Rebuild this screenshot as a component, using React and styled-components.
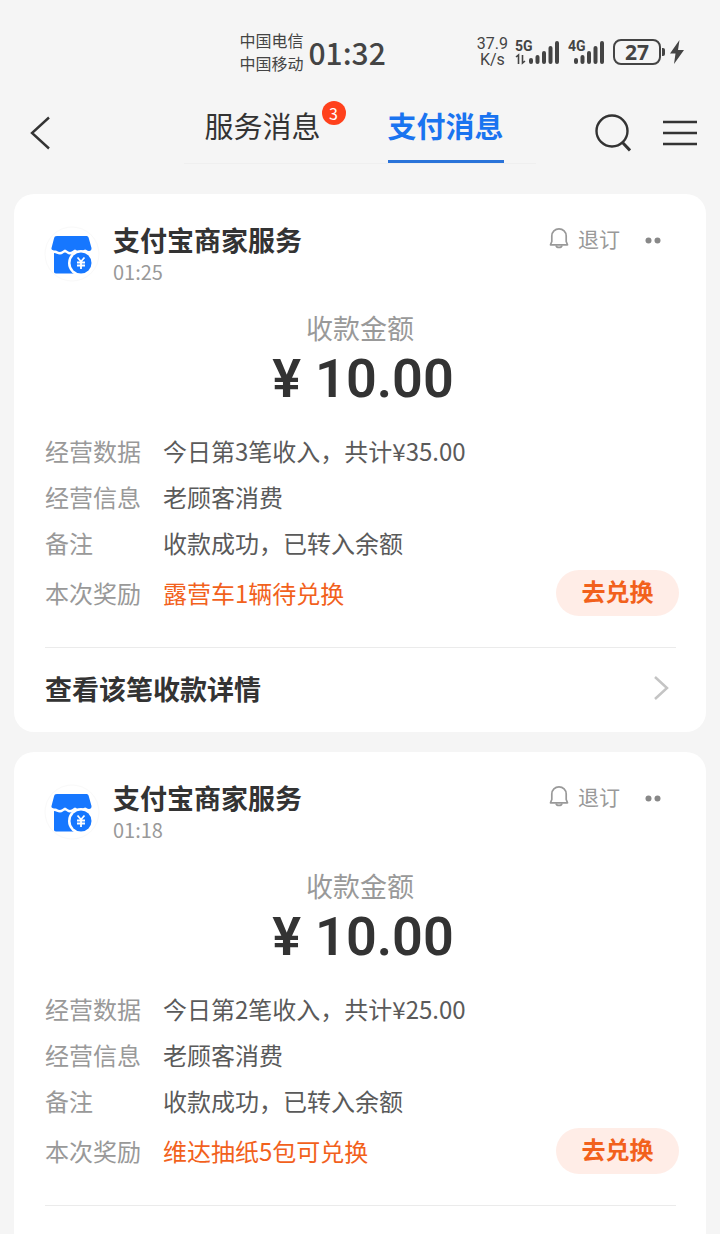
import React, { useState } from 'react';
import styled, { createGlobalStyle } from 'styled-components';

const GlobalStyle = createGlobalStyle`
  * {
    box-sizing: border-box;
  }

  body {
    margin: 0;
    background: #f5f5f5;
    font-family: 'Noto Sans CJK SC', 'Noto Sans', sans-serif;
    color: #333;
  }

  button {
    padding: 0;
    border: none;
    background: none;
    font-family: inherit;
    color: inherit;
    cursor: pointer;
  }

  svg {
    display: block;
    flex-shrink: 0;
  }
`;

// Page
const Page = styled.div`
  display: flex;
  flex-direction: column;
  height: 100vh;
  overflow: hidden;
`;

const MessageList = styled.main`
  flex: 1;
  min-height: 0;
  display: flex;
  flex-direction: column;
  gap: 20px;
  padding: 20px 14px;
  overflow-y: auto;
  scrollbar-width: none;
`;

// Status bar
const StatusBar = styled.div`
  display: flex;
  flex-shrink: 0;
  align-items: center;
  justify-content: flex-end;
  height: 92px;
  padding: 12px 36px 0 0;
  color: #444;
`;

const Carriers = styled.div`
  margin-right: 5px;
  font-size: 16px;
  line-height: 23px;
`;

const Clock = styled.div`
  margin-right: 91px;
  font-size: 30px;
  font-weight: 500;
  line-height: 46px;
`;

const NetSpeed = styled.div`
  margin-right: 7px;
  font-family: Roboto, sans-serif;
  font-size: 16px;
  line-height: 16px;
  text-align: center;
`;

const Signal = styled.div`
  position: relative;
  width: ${({ $wide }) => ($wide ? 44 : 36)}px;
  height: 28px;
  margin-right: 9px;

  svg {
    position: absolute;
    right: 0;
    bottom: 0;
  }
`;

const SignalType = styled.span`
  position: absolute;
  left: 0;
  top: 0;
  font-family: Roboto, sans-serif;
  font-size: 14px;
  font-weight: 700;
  line-height: 16px;
`;

const Battery = styled.div`
  display: flex;
  align-items: center;
  justify-content: center;
  width: 48px;
  height: 26px;
  border: 2px solid #444;
  border-radius: 8px;
  font-family: 'Open Sans', sans-serif;
  font-size: 21px;
  font-weight: 700;
  line-height: 22px;
`;

const BatteryCap = styled.div`
  width: 3px;
  height: 8px;
  margin: 0 5px 0 1px;
  border-radius: 0 2px 2px 0;
  background: #444;
`;

// Navigation
const NavBar = styled.header`
  display: grid;
  flex-shrink: 0;
  grid-template-columns: 1fr auto 1fr;
  height: 82px;
`;

const BackButton = styled.button`
  justify-self: start;
  height: 82px;
  padding-left: 30px;
`;

const Tabs = styled.nav`
  display: flex;
  gap: 67px;
  height: 72px;
  padding: 0 32px 0 20px;
  border-bottom: 1px solid #efefef;
`;

const Tab = styled.button`
  position: relative;
  height: 71px;
  padding-bottom: 2px;
  border-bottom: 3px solid ${({ $active }) => ($active ? '#2a73d9' : 'transparent')};
  font-size: 29px;
  font-weight: ${({ $active }) => ($active ? 700 : 400)};
  line-height: 66px;
  color: ${({ $active }) => ($active ? '#1a74f0' : '#333')};
`;

const Badge = styled.span`
  position: absolute;
  top: 9px;
  right: -25px;
  width: 24px;
  height: 24px;
  border-radius: 50%;
  background: #ff411c;
  color: #fff;
  font-size: 16px;
  line-height: 24px;
  text-align: center;
`;

const Actions = styled.div`
  display: flex;
  align-items: center;
  justify-content: flex-end;
  gap: 32px;
  padding-right: 23px;
`;

// Message card
const Card = styled.article`
  flex-shrink: 0;
  padding-top: 28px;
  border-radius: 20px;
  background: #fff;
`;

const CardHeader = styled.div`
  display: flex;
  align-items: flex-start;
  padding: 0 44px 0 30px;
`;

const Avatar = styled.div`
  margin: 4px 13px 0 0;
`;

const Sender = styled.div`
  flex: 1;
`;

const SenderName = styled.h2`
  margin: 0;
  font-size: 27px;
  font-weight: 700;
  line-height: 36px;
`;

const SentAt = styled.div`
  font-size: 20px;
  line-height: 28px;
  color: #999;
`;

const Unsubscribe = styled.button`
  display: flex;
  align-items: center;
  gap: 9px;
  margin-right: 25px;
  font-size: 21px;
  line-height: 32px;
  color: #999;
`;

const MoreButton = styled.button`
  display: flex;
  align-items: center;
  height: 36px;
  color: #888;
`;

const AmountLabel = styled.div`
  margin-top: 24px;
  font-size: 27px;
  line-height: 36px;
  color: #999;
  text-align: center;
`;

const Amount = styled.div`
  display: flex;
  justify-content: center;
  gap: 14px;
  padding-left: 6px;
  font-family: Roboto, sans-serif;
  font-size: 54px;
  font-weight: 600;
  line-height: 66px;
`;

const Fields = styled.dl`
  margin: 16px 27px 0 31px;
`;

const Field = styled.div`
  display: flex;
  align-items: center;
  font-size: 24px;
  line-height: 46px;

  &:last-child {
    margin-top: 4px;
  }
`;

const FieldLabel = styled.dt`
  width: 96px;
  margin-right: 22px;
  color: #999;
`;

const FieldValue = styled.dd`
  display: flex;
  flex: 1;
  justify-content: space-between;
  margin: 0;
  color: ${({ $highlight }) => ($highlight ? '#f2611c' : '#5a5a5a')};
`;

const RedeemButton = styled.button`
  width: 123px;
  height: 46px;
  padding-bottom: 4px;
  border-radius: 23px;
  background: #ffede7;
  color: #f2611c;
  font-size: 24px;
  font-weight: 700;
  line-height: 42px;
`;

const DetailLink = styled.a`
  display: flex;
  align-items: center;
  justify-content: space-between;
  height: 85px;
  margin: 31px 30px 0 31px;
  padding: 0 7px 4px 0;
  border-top: 1px solid #ebebeb;
  color: #333;
  font-size: 27px;
  font-weight: 700;
  text-decoration: none;
`;

const messages = [
  {
    id: 1,
    time: '01:25',
    amount: '10.00',
    summary: '今日第3笔收入，共计¥35.00',
    reward: '露营车1辆待兑换',
  },
  {
    id: 2,
    time: '01:18',
    amount: '10.00',
    summary: '今日第2笔收入，共计¥25.00',
    reward: '维达抽纸5包可兑换',
  },
];

const SignalBars = ({ data }) => (
  <svg width="44" height="28" viewBox="0 0 44 28" stroke="#444" strokeWidth="4" strokeLinecap="round">
    <path d="M16 22v2M22.500 19v5M29 15v9M35.500 10v14M42 5v19" />
    {data && <path d="M1 19l2.500-2v9M7.500 17v8l2.500-2" strokeWidth="1.600" fill="none" strokeLinecap="butt" />}
  </svg>
);

const ShopLogo = () => (
  <svg width="56" height="56" viewBox="0 0 56 56">
    <circle cx="28" cy="28" r="27" fill="#fff" stroke="#f9f9f9" />
    <path
      d="M13 10h29c1.500 0 2.300.6 2.700 2L47.500 22c.3 2-1 3-2.500 3-2 0-2.500-1.500-4-1.500S38.500 26 36 26 32.500 23.500 31 23.500 28.500 26 26 26 22.500 23.500 21 23.500 18.500 26 16 26s-3-1.500-4.500-1.500c-2 0-4.500-.5-4-2.500L10 12.500c.4-1.700 1-2.500 3-2.500z"
      fill="#1677ff"
    />
    <path d="M10 27c2 0 3.500 1.500 6 1.500S19.500 26.500 21 26.500s2.500 2 5 2 3.500-2 5-2 2.500 2 5 2h8V47.500H12c-1.500 0-2-1-2-2z" fill="#1677ff" />
    <circle cx="37" cy="37" r="13" fill="#fff" />
    <circle cx="37" cy="37" r="10.500" fill="#1677ff" />
    <path d="M33.500 31.500l3.500 4 3.500-4M33 36.500h8M33 39.500h8M37 35.500V43" stroke="#fff" strokeWidth="1.800" fill="none" />
  </svg>
);

const BellIcon = () => (
  <svg width="20" height="22" viewBox="0 0 20 22" fill="none" stroke="#999" strokeWidth="1.700" strokeLinejoin="round">
    <path d="M2.800 14.500V9a7.200 7.200 0 0 1 14.400 0v5.500l1.300 3.300h-17z" />
    <path d="M7 18.500c.5 2.500 5.500 2.500 6 0" />
  </svg>
);

const Message = ({ time, amount, summary, reward }) => (
  <Card>
    <CardHeader>
      <Avatar>
        <ShopLogo />
      </Avatar>
      <Sender>
        <SenderName>支付宝商家服务</SenderName>
        <SentAt>{time}</SentAt>
      </Sender>
      <Unsubscribe>
        <BellIcon />
        退订
      </Unsubscribe>
      <MoreButton aria-label="更多">
        <svg width="17" height="8" viewBox="0 0 17 8" fill="currentColor">
          <circle cx="3.500" cy="4.500" r="3" />
          <circle cx="12.500" cy="4.500" r="3" />
        </svg>
      </MoreButton>
    </CardHeader>

    <AmountLabel>收款金额</AmountLabel>
    <Amount>
      <span>¥</span>
      <span>{amount}</span>
    </Amount>

    <Fields>
      <Field>
        <FieldLabel>经营数据</FieldLabel>
        <FieldValue>{summary}</FieldValue>
      </Field>
      <Field>
        <FieldLabel>经营信息</FieldLabel>
        <FieldValue>老顾客消费</FieldValue>
      </Field>
      <Field>
        <FieldLabel>备注</FieldLabel>
        <FieldValue>收款成功，已转入余额</FieldValue>
      </Field>
      <Field>
        <FieldLabel>本次奖励</FieldLabel>
        <FieldValue $highlight>
          {reward}
          <RedeemButton>去兑换</RedeemButton>
        </FieldValue>
      </Field>
    </Fields>

    <DetailLink href="#detail">
      查看该笔收款详情
      <svg width="16" height="26" viewBox="0 0 16 26" fill="none" stroke="#c4c4c4" strokeWidth="2.500">
        <path d="M2 2l12 11L2 24" />
      </svg>
    </DetailLink>
  </Card>
);

const App = () => {
  const [tab, setTab] = useState('pay');

  return (
    <Page>
      <GlobalStyle />
      <StatusBar>
        <Carriers>
          <div>中国电信</div>
          <div>中国移动</div>
        </Carriers>
        <Clock>01:32</Clock>
        <NetSpeed>
          <div>37.9</div>
          <div>K/s</div>
        </NetSpeed>
        <Signal $wide>
          <SignalType>5G</SignalType>
          <SignalBars data />
        </Signal>
        <Signal>
          <SignalType>4G</SignalType>
          <SignalBars />
        </Signal>
        <Battery>27</Battery>
        <BatteryCap />
        <svg width="14" height="24" viewBox="0 0 14 24" fill="#444">
          <path d="M9.500 0L0 13.500h5.500L4 24l10-14H8z" />
        </svg>
      </StatusBar>

      <NavBar>
        <BackButton aria-label="返回">
          <svg width="20" height="34" viewBox="0 0 20 34" fill="none" stroke="#333" strokeWidth="2.400">
            <path d="M19 1.500L2 17l17 15.500" />
          </svg>
        </BackButton>
        <Tabs>
          <Tab $active={tab === 'service'} onClick={() => setTab('service')}>
            服务消息
            <Badge>3</Badge>
          </Tab>
          <Tab $active={tab === 'pay'} onClick={() => setTab('pay')}>
            支付消息
          </Tab>
        </Tabs>
        <Actions>
          <button aria-label="搜索">
            <svg width="36" height="38" viewBox="0 0 36 38" fill="none" stroke="#333" strokeWidth="2.400">
              <circle cx="17" cy="17" r="15.500" />
              <path d="M27.500 28.500l7.500 8" strokeWidth="3" />
            </svg>
          </button>
          <button aria-label="菜单">
            <svg width="34" height="26" viewBox="0 0 34 26" stroke="#333" strokeWidth="2.400">
              <path d="M0 2h34M0 13h34M0 24h34" />
            </svg>
          </button>
        </Actions>
      </NavBar>

      <MessageList>
        {messages.map((message) => (
          <Message key={message.id} {...message} />
        ))}
      </MessageList>
    </Page>
  );
};

export default App;
